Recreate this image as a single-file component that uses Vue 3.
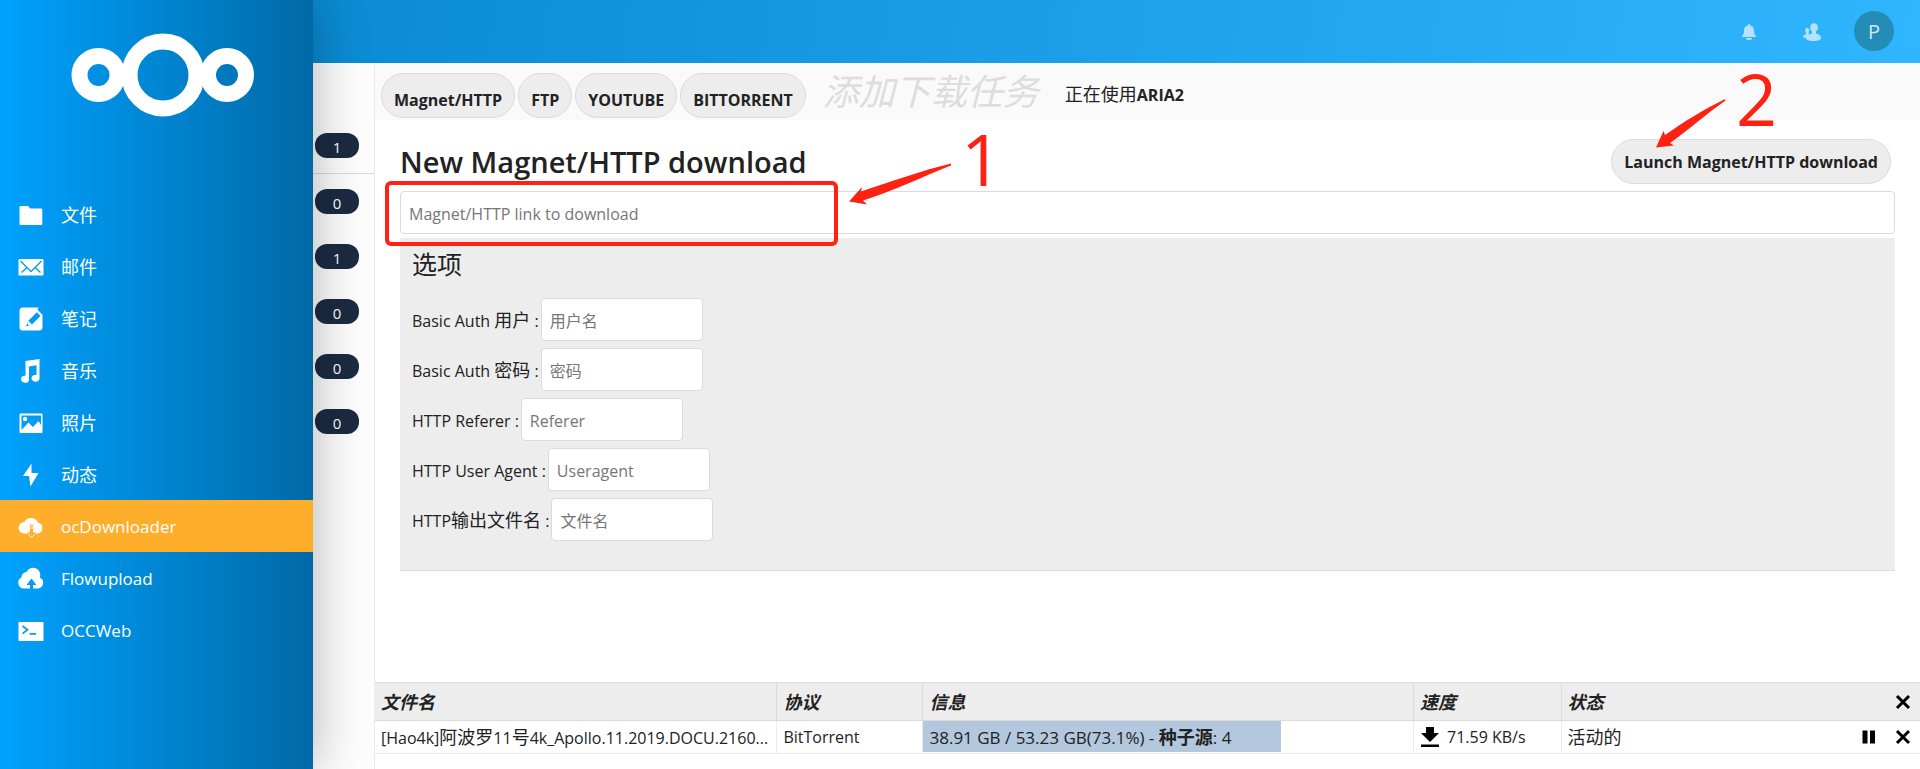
<script setup>
const apps = [
  { name: '文件', icon: 'files', zh: true },
  { name: '邮件', icon: 'mail', zh: true },
  { name: '笔记', icon: 'notes', zh: true },
  { name: '音乐', icon: 'music', zh: true },
  { name: '照片', icon: 'photos', zh: true },
  { name: '动态', icon: 'activity', zh: true },
  { name: 'ocDownloader', icon: 'download', active: true },
  { name: 'Flowupload', icon: 'upload' },
  { name: 'OCCWeb', icon: 'terminal' },
]
const counters = [1, 0, 1, 0, 0, 0]
const protocols = ['Magnet/HTTP', 'FTP', 'YOUTUBE', 'BITTORRENT']
const options = [
  { id: 'auth-user', latin: 'Basic Auth ', zh: '用户', hint: '用户名' },
  { id: 'auth-pass', latin: 'Basic Auth ', zh: '密码', hint: '密码' },
  { id: 'referer', latin: 'HTTP Referer', zh: '', hint: 'Referer' },
  { id: 'agent', latin: 'HTTP User Agent', zh: '', hint: 'Useragent' },
  { id: 'outname', latin: 'HTTP', zh: '输出文件名', hint: '文件名' },
]
const progress = 73.1
</script>

<template>
  <div class="page">
    <aside class="drawer">
      <a class="logo" href="#" aria-label="Nextcloud">
        <svg width="184" height="84" viewBox="0 0 184 84" fill="none" stroke="#fff" stroke-width="16">
          <circle cx="27.500" cy="42" r="19" />
          <circle cx="92" cy="42" r="33.500" />
          <circle cx="156" cy="42" r="19" />
        </svg>
      </a>
      <nav class="apps">
        <a v-for="app in apps" :key="app.name" href="#" class="app" :class="{ active: app.active, zh: app.zh }">
          <svg class="app-icon" width="26" height="26" viewBox="0 0 26 26" fill="#fff">
            <path v-if="app.icon === 'files'" d="M2.500 4h7.500l2.500 2.500H23a1.300 1.300 0 0 1 1.300 1.300V22a1 1 0 0 1-1 1H2.500a1 1 0 0 1-1-1V5a1 1 0 0 1 1-1z" />
            <g v-else-if="app.icon === 'mail'">
              <path d="M1.500 5h23a1 1 0 0 1 1 1v14.500a1 1 0 0 1-1 1h-23a1 1 0 0 1-1-1V6a1 1 0 0 1 1-1z" />
              <path d="M2.500 7l10.500 10.500L23.500 7M3.500 18.500l5.500-5M22.500 18.500l-5.500-5" fill="none" stroke="#059bf1" stroke-width="1.300" />
            </g>
            <g v-else-if="app.icon === 'notes'">
              <path d="M5 1.500h15.500l-1 2.200 5 5V21a3.500 3.500 0 0 1-3.500 3.500H5A3.500 3.500 0 0 1 1.500 21V5A3.500 3.500 0 0 1 5 1.500z" />
              <path d="M18.800 6.200l3.700 3.700-8.500 8.500-5.700 1.800 2-5.500z" fill="#059bf1" />
              <path d="M10.300 14.700l3.700 3.700-3.300 1-1.400-1.300z" fill="#fff" />
              <path d="M8.300 20.200l.8-2.200 1.500 1.400z" fill="#059bf1" />
            </g>
            <path v-else-if="app.icon === 'music'" d="M7.500 3L21.500 1v19.500a4 3.500 0 1 1-3-3.600V7.200l-7.500 1.200v13a4 3.500 0 1 1-3.500-3.600z" />
            <g v-else-if="app.icon === 'photos'">
              <path fill-rule="evenodd" d="M2.500 3.500h21a1 1 0 0 1 1 1V22a1 1 0 0 1-1 1h-21a1 1 0 0 1-1-1V4.500a1 1 0 0 1 1-1zM3.500 5.500V20l7-7.500 4.500 4.500 5.500-6 2.500 4V5.500z" />
              <circle cx="7" cy="9" r="2.200" />
            </g>
            <path v-else-if="app.icon === 'activity'" d="M13.500 1.500L5 14h6L12.500 24.500 20.500 11h-7z" />
            <g v-else-if="app.icon === 'download'">
              <path d="M6.200 19.500a5.700 5.700 0 0 1 .2-11.400A7.500 7.500 0 0 1 20 8.500a5.600 5.600 0 0 1-.5 11z" />
              <path d="M11.500 10h4v8h3.500l-5.500 5.500-5.500-5.500h3.500z" fill="#ffae2c" stroke="#fff" stroke-width="0.800" />
              <path d="M11.500 12h4M11.500 14h4" fill="none" stroke="#fff" stroke-width="0.700" />
            </g>
            <g v-else-if="app.icon === 'upload'">
              <path d="M6 22.500a5.800 5.800 0 0 1-2.500-11A5 5 0 0 1 8.500 6a7.200 7.200 0 0 1 13.300 5.500 5.800 5.800 0 0 1-1.800 11z" />
              <path d="M13.500 12.500l5 6.500h-3.500v4h-3v-4H8.500z" fill="#059bf1" />
            </g>
            <g v-else>
              <path d="M1 4h24a.5.5 0 0 1 .5.5v18a.5.5 0 0 1-.5.5H1a.5.5 0 0 1-.5-.5v-18A.5.5 0 0 1 1 4z" />
              <path d="M4.500 8l5 3.800-5 3.800M11.500 15.800H18" fill="none" stroke="#059bf1" stroke-width="1.800" />
            </g>
          </svg>
          <span>{{ app.name }}</span>
        </a>
      </nav>
    </aside>

    <div class="workspace">
      <header class="header">
        <button class="head-button" aria-label="Notifications">
          <svg width="16" height="18" viewBox="0 0 16 18" fill="#b4e2ff">
            <path d="M8 1a1 1 0 0 1 1 1.200c2.700.6 4 2.500 4 5.300 0 3 .6 4.300 2 5.500.6.600.3 1-.4 1H1.400c-.7 0-1-.4-.4-1 1.400-1.200 2-2.500 2-5.500 0-2.800 1.300-4.700 4-5.300A1 1 0 0 1 8 1zM5 15h6a3 2 0 0 1-6 0z" />
          </svg>
        </button>
        <button class="head-button" aria-label="Contacts">
          <svg width="18" height="18" viewBox="0 0 18 18" fill="#b4e2ff">
            <ellipse cx="11" cy="4.500" rx="3.800" ry="4.300" />
            <path d="M9 7h4v3.500c2.500 1 5 1.700 5 4.500 0 2-2.500 3-7.500 3S3 17.200 3 15c0-2.800 3.500-3.500 6-4.500z" />
            <ellipse cx="4.200" cy="7.500" rx="2" ry="2.700" />
            <path d="M3.200 9h2.300v2.500l1 .5c-2 .8-3.200 1.500-4 3C1 15 .2 14.500.2 13.300c0-1.300 1.800-1.600 3-2.300z" />
          </svg>
        </button>
        <button class="avatar">P</button>
      </header>

      <div class="body">
        <aside class="counters">
          <span v-for="(n, i) in counters" :key="i" class="counter-row"><b class="counter">{{ n }}</b></span>
        </aside>

        <main class="content">
          <div class="controls">
            <div class="protocols">
              <button v-for="p in protocols" :key="p" class="pill tab">{{ p }}</button>
            </div>
            <span class="tagline">添加下载任务</span>
            <span class="using"><span class="zh">正在使用</span><strong>ARIA2</strong></span>
          </div>

          <section class="form">
            <div class="form-head">
              <h2>New Magnet/HTTP download</h2>
              <button class="pill launch">Launch Magnet/HTTP download</button>
            </div>
            <input class="field link" type="text" aria-label="Magnet/HTTP link" placeholder="Magnet/HTTP link to download" />
            <div class="options">
              <h3>选项</h3>
              <div v-for="o in options" :key="o.id" class="option">
                <label :for="o.id">{{ o.latin }}<span v-if="o.zh" class="zh">{{ o.zh }}</span> :</label>
                <input :id="o.id" class="field" type="text" :placeholder="o.hint" />
              </div>
            </div>
          </section>

          <table class="queue">
            <colgroup>
              <col class="c-name" /><col class="c-proto" /><col class="c-info" /><col class="c-speed" /><col />
            </colgroup>
            <thead>
              <tr>
                <th>文件名</th>
                <th>协议</th>
                <th>信息</th>
                <th>速度</th>
                <th>
                  <div class="status">
                    <span>状态</span>
                    <button class="tool" aria-label="Remove all">
                      <svg width="16" height="16" viewBox="0 0 16 16"><path d="M2 2l12 12M14 2L2 14" stroke="#000" stroke-width="3" /></svg>
                    </button>
                  </div>
                </th>
              </tr>
            </thead>
            <tbody>
              <tr>
                <td class="name">[Hao4k]<span class="zh">阿波罗</span>11<span class="zh">号</span>4k_Apollo.11.2019.DOCU.2160...</td>
                <td>BitTorrent</td>
                <td class="info">
                  <div class="bar" :style="{ width: progress + '%' }">38.91 GB / 53.23 GB(73.1%) - <strong class="zh">种子源</strong>: 4</div>
                </td>
                <td>
                  <div class="speed">
                    <svg width="18" height="20" viewBox="0 0 18 20"><path d="M5 0h8v6h5l-9 9-9-9h5zM0 17.500h18V20H0z" /></svg>
                    <span>71.59 KB/s</span>
                  </div>
                </td>
                <td>
                  <div class="status">
                    <span class="zh">活动的</span>
                    <button class="tool" aria-label="Pause">
                      <svg width="16" height="16" viewBox="0 0 16 16"><path d="M1.500 1.500h5v13h-5zM9 1.500h5v13H9z" /></svg>
                    </button>
                    <button class="tool" aria-label="Remove">
                      <svg width="16" height="16" viewBox="0 0 16 16"><path d="M2 2l12 12M14 2L2 14" stroke="#000" stroke-width="3" /></svg>
                    </button>
                  </div>
                </td>
              </tr>
            </tbody>
          </table>
        </main>
      </div>
    </div>

    <div class="mark frame"></div>
    <svg class="mark arrow-one" width="106" height="44" viewBox="0 0 106 44" fill="#ff2111">
      <path d="M1 39.500L14 25l-1 4.500C45 19 72 9 103 1.500v2C76 14 50 27 15 38.500l4 4z" />
    </svg>
    <span class="mark number-one">1</span>
    <svg class="mark arrow-two" width="74" height="52" viewBox="0 0 74 52" fill="#ff2111">
      <path d="M2 49.500L9.500 33l1.500 4C31 23 49 12 71 1l.5 1.500C52 16 36 31 16 45l4 2.500z" />
    </svg>
    <span class="mark number-two">2</span>
  </div>
</template>

<style>
html, body { margin: 0; }
</style>

<style scoped>
.page {
  position: relative;
  display: flex;
  min-height: 100vh;
  overflow: hidden;
  background: #fff;
  color: #222;
  font: 16px/24px "Open Sans", "Noto Sans CJK SC", sans-serif;
}
.page * { box-sizing: border-box; }
button, input { font-family: inherit; }
button { cursor: pointer; }

.drawer {
  z-index: 1;
  flex: 0 0 313px;
  background: linear-gradient(90deg, #00a2ff, #0069a6);
  box-shadow: 0 0 50px rgba(0, 0, 0, 0.3);
}
.logo { display: flex; justify-content: center; height: 188px; padding: 33px 0 0 12px; }
.app {
  display: flex;
  align-items: center;
  gap: 17px;
  height: 52px;
  padding: 2px 20px 0 18px;
  color: #fff;
  font-size: 17px;
  text-decoration: none;
}
.app.active { background: #ffae2c; }
.zh { font-size: 18px; }

.workspace { flex: 1; min-width: 0; display: flex; flex-direction: column; }
.header {
  display: flex;
  justify-content: flex-end;
  align-items: center;
  height: 63px;
  padding: 0 26px 0 0;
  background: linear-gradient(100deg, #0a8bd3, #30b6ff);
}
.head-button {
  display: flex;
  align-items: center;
  justify-content: center;
  width: 63px;
  height: 63px;
  padding: 0;
  border: 0;
  background: none;
}
.avatar {
  width: 40px;
  height: 40px;
  margin-left: 11px;
  margin-bottom: 1px;
  padding: 0;
  border: 0;
  border-radius: 50%;
  background: #248db5;
  color: #d3e8f0;
  font-size: 20px;
}

.body { flex: 1; display: flex; }
.counters { flex: 0 0 62px; padding-top: 55px; border-right: 1px solid #ebebeb; background: #fdfdfd; }
.counter-row { display: flex; align-items: center; height: 55px; padding-left: 2px; }
.counter-row:first-child { height: 56px; border-bottom: 1px solid #dbdbdb; }
.counter {
  width: 44px;
  height: 25px;
  border-radius: 12px;
  background: #1c2b42;
  color: #fff;
  font-size: 15px;
  font-weight: 400;
  line-height: 28px;
  text-align: center;
}

.content { flex: 1; min-width: 0; display: flex; flex-direction: column; }
.controls { display: flex; align-items: center; height: 57px; padding: 0 6px; background: #fafafa; }
.protocols { display: flex; gap: 3px; padding-top: 8px; }
.pill {
  height: 45px;
  padding: 0 12px;
  border: 1px solid #dbdbdb;
  border-radius: 23px;
  background: #ededed;
  color: #222;
  font-size: 16px;
  font-weight: 700;
}
.tab { padding-top: 8px; }
.tagline { margin-left: 17px; color: #ddd; font-size: 36px; font-style: italic; line-height: 48px; }
.using { margin-left: 26px; padding-top: 6px; }

.form { padding: 19px 25px 0; }
.form-head { display: flex; justify-content: space-between; align-items: center; margin-bottom: 7px; }
h2 { margin: 0; font-size: 29px; font-weight: 600; line-height: 40px; }
.launch { margin-right: 4px; }
.field {
  width: 162px;
  height: 43px;
  padding: 3px 8px 0;
  border: 1px solid #dbdbdb;
  border-radius: 4px;
  background: #fff;
  color: #222;
  font-size: 16px;
}
.field::placeholder { color: #767676; }
.link { display: block; width: 100%; }
.options { margin-top: 4px; padding: 10px 12px 22px; border-bottom: 1px solid #dbdbdb; background: #ededed; }
h3 { margin: 0 0 18px; font-size: 25px; font-weight: 400; line-height: 32px; }
.option { display: flex; align-items: center; gap: 2px; height: 43px; margin-bottom: 7px; }
.option label { padding-top: 2px; white-space: pre; }

.queue {
  width: 100%;
  margin: auto 0 15px;
  border-collapse: separate;
  border-spacing: 0;
  table-layout: fixed;
}
.c-name { width: 26.05%; }
.c-proto { width: 9.45%; }
.c-info { width: 31.75%; }
.c-speed { width: 9.55%; }
th, td { padding: 0 6px; border-right: 1px solid #ebebeb; white-space: nowrap; text-align: left; }
th {
  height: 39px;
  border-top: 1px solid #dbdbdb;
  border-bottom: 1px solid #dbdbdb;
  border-right-color: #dbdbdb;
  background: #ededed;
  font-size: 18px;
  font-style: italic;
  font-weight: 700;
}
td { height: 33px; border-bottom: 1px solid #ebebeb; }
th:last-child, td:last-child { border-right: 0; }
.name { padding-right: 0; }
.info { padding: 0; vertical-align: top; }
.bar { height: 31px; padding-left: 6px; background: #b3c8dd; font-size: 17px; line-height: 32px; }
.speed { display: flex; align-items: center; gap: 8px; padding-left: 1px; }
.status { display: flex; align-items: center; gap: 18px; padding-right: 3px; }
.status span { flex: 1; }
.tool { display: flex; padding: 0; border: 0; background: none; }

.mark { position: absolute; z-index: 2; color: #ff2111; pointer-events: none; }
.frame { left: 385px; top: 181px; width: 453px; height: 65px; border: 4px solid #ff2111; border-radius: 6px; }
.arrow-one { left: 848px; top: 162px; }
.arrow-two { left: 1654px; top: 98px; }
.number-one, .number-two { font-size: 72px; line-height: 72px; }
.number-one { left: 961px; top: 122px; }
.number-two { left: 1736px; top: 62px; }
</style>
